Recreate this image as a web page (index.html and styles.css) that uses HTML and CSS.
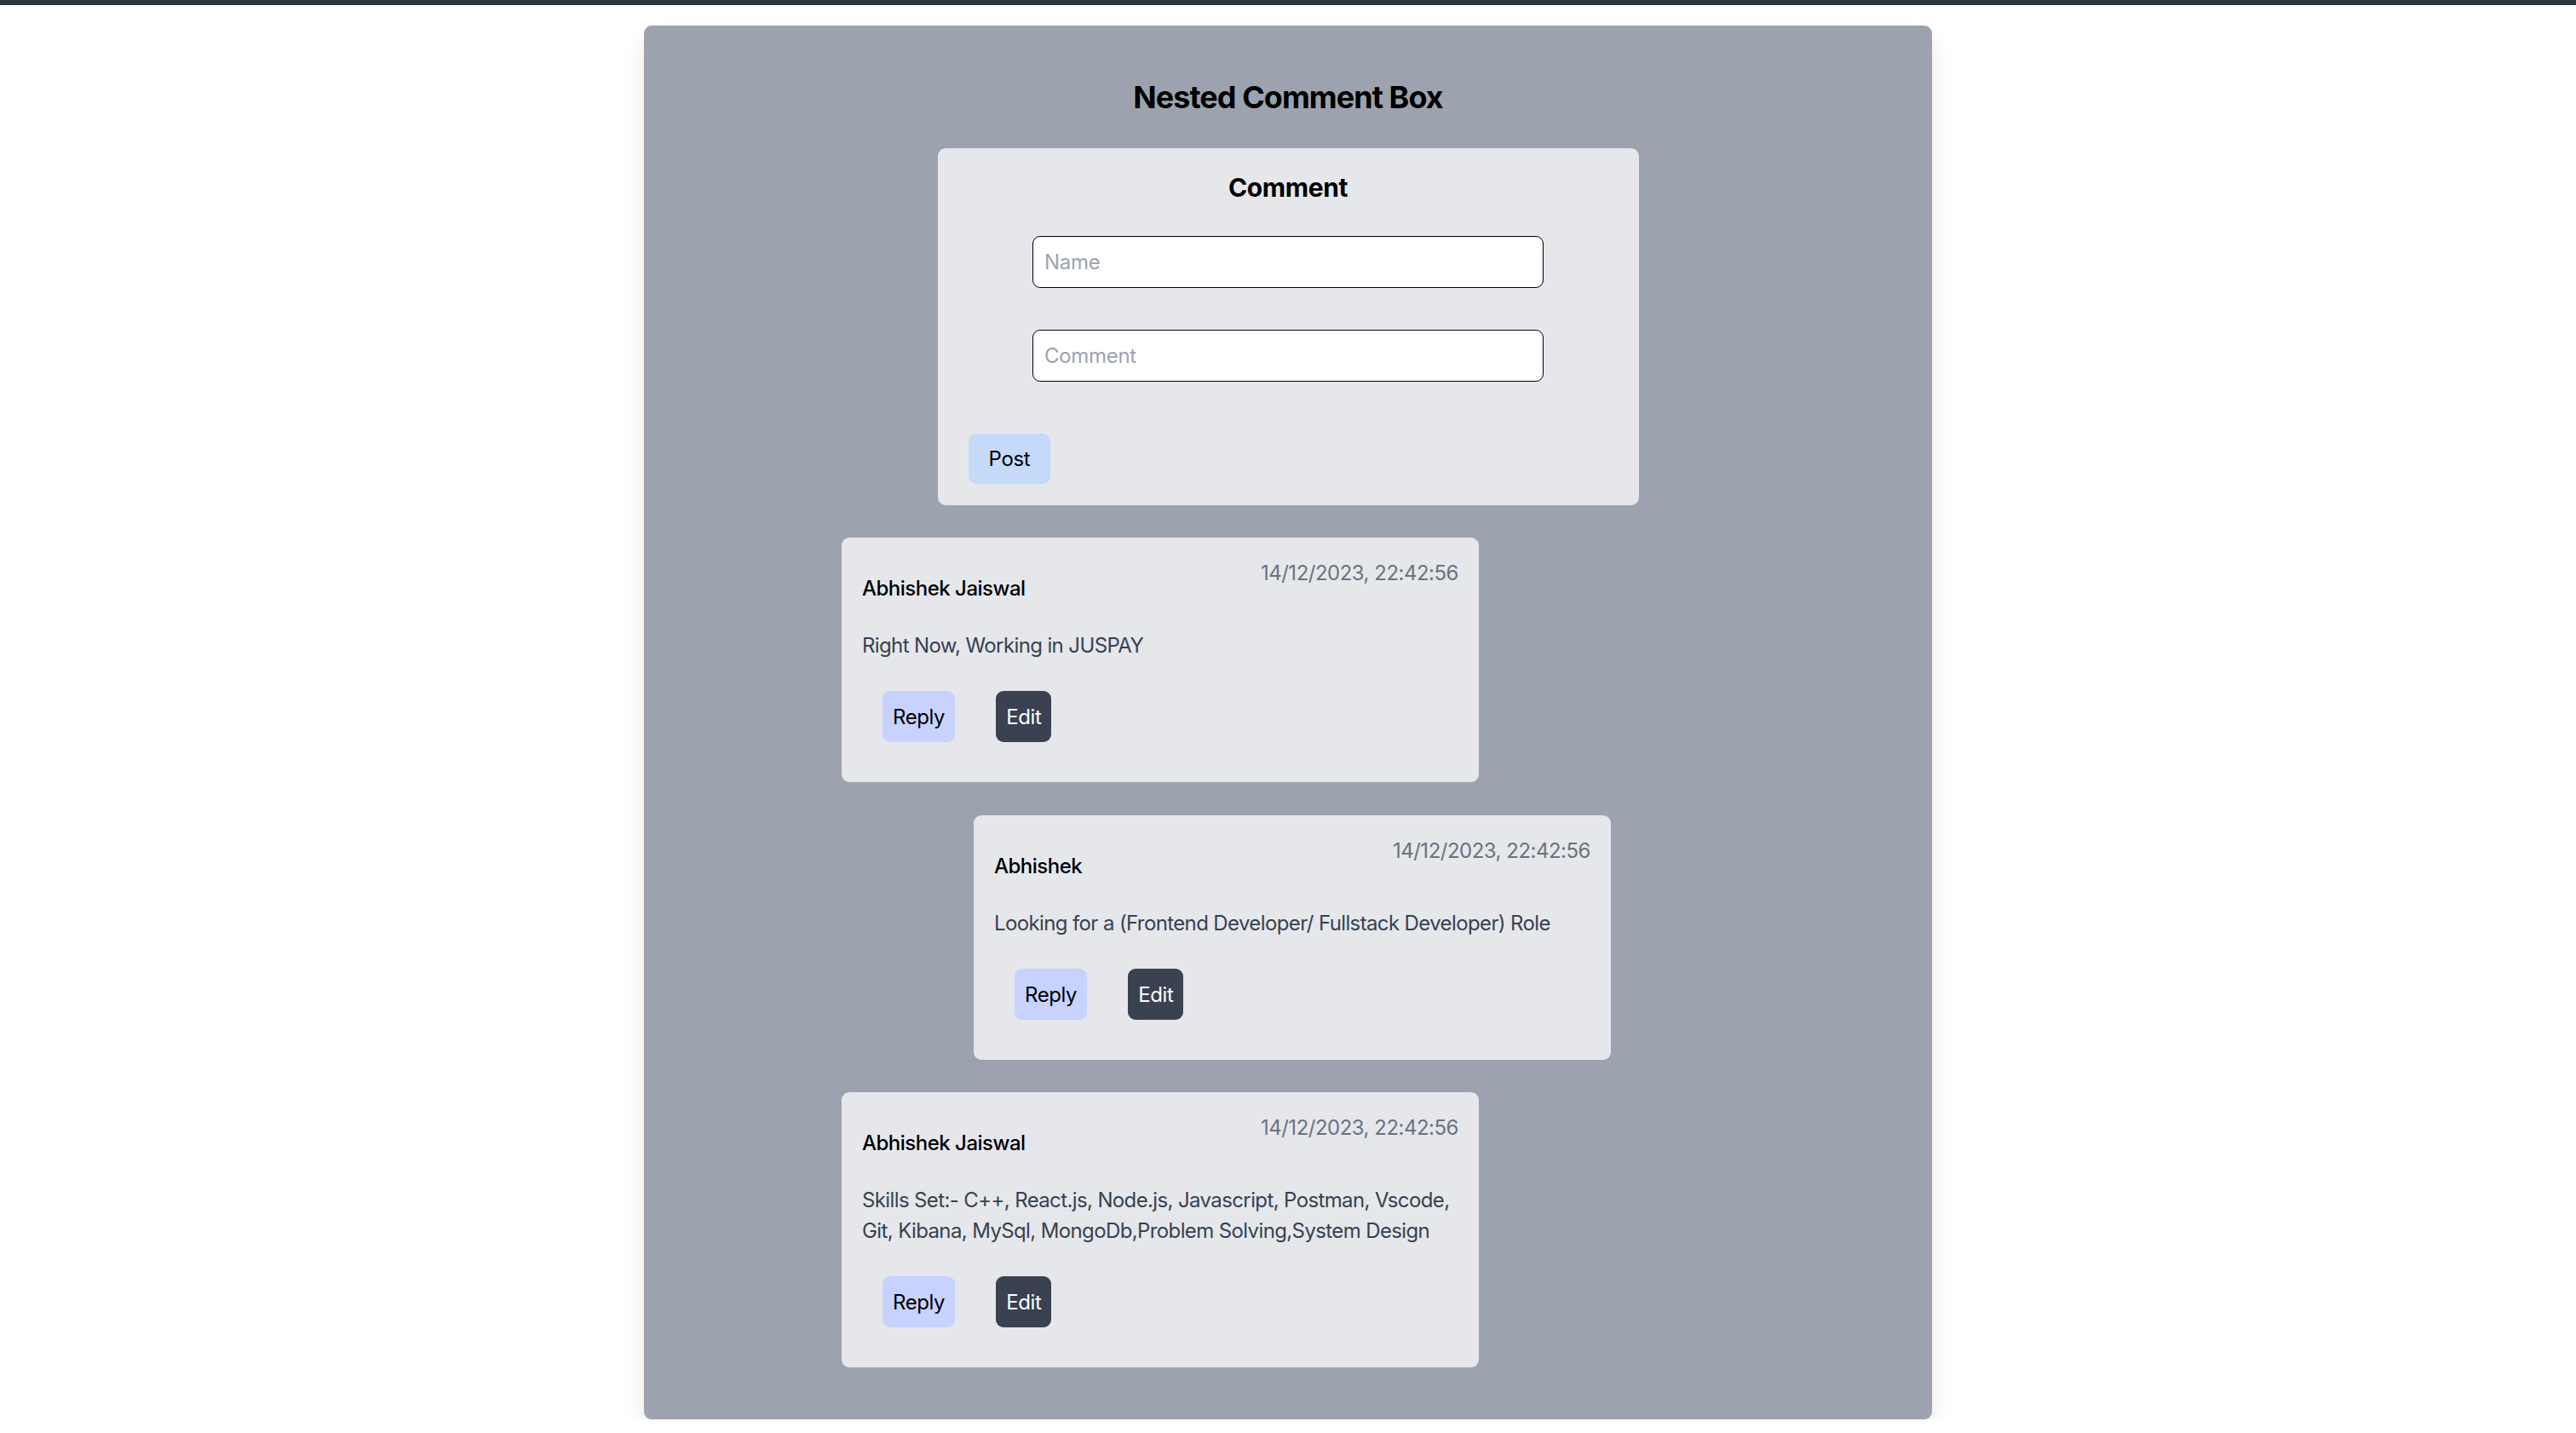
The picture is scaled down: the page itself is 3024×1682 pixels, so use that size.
FILE: index.html
```html
<!DOCTYPE html>
<html lang="en">
<head>
<meta charset="utf-8">
<title>Nested Comment Box</title>
<link rel="stylesheet" href="styles.css">
</head>
<body>
<div class="topbar"></div>
<main class="box">
  <h1 class="title">Nested Comment Box</h1>
  <section class="form-card">
    <h2 class="form-title">Comment</h2>
    <input class="field field-first" type="text" placeholder="Name">
    <input class="field field-second" type="text" placeholder="Comment">
    <button class="post">Post</button>
  </section>
  <div class="comments">
    <div class="thread">
      <article class="card">
        <div class="card-head">
          <span class="author">Abhishek Jaiswal</span>
          <span class="stamp">14/12/2023, 22:42:56</span>
        </div>
        <p class="body">Right Now, Working in JUSPAY</p>
        <div class="actions">
          <button class="btn btn-reply">Reply</button>
          <button class="btn btn-edit">Edit</button>
        </div>
      </article>
      <div class="replies">
        <article class="card">
          <div class="card-head">
            <span class="author">Abhishek</span>
            <span class="stamp">14/12/2023, 22:42:56</span>
          </div>
          <p class="body">Looking for a (Frontend Developer/ Fullstack Developer) Role</p>
          <div class="actions">
            <button class="btn btn-reply">Reply</button>
            <button class="btn btn-edit">Edit</button>
          </div>
        </article>
      </div>
    </div>
    <div class="thread">
      <article class="card">
        <div class="card-head">
          <span class="author">Abhishek Jaiswal</span>
          <span class="stamp">14/12/2023, 22:42:56</span>
        </div>
        <p class="body">Skills Set:- C++, React.js, Node.js, Javascript, Postman, Vscode, Git, Kibana, MySql, MongoDb,Problem Solving,System Design</p>
        <div class="actions">
          <button class="btn btn-reply">Reply</button>
          <button class="btn btn-edit">Edit</button>
        </div>
      </article>
    </div>
  </div>
</main>
</body>
</html>
```

FILE: styles.css
```css
* {
  box-sizing: border-box;
}

html, body {
  margin: 0;
  padding: 0;
  background: #ffffff;
}

body {
  font-family: Inter, "Noto Sans", "Liberation Sans", sans-serif;
  font-size: 24px;
  line-height: 36px;
  color: #000000;
}

.topbar {
  height: 6px;
  background: #303342;
}

.box {
  width: 1512px;
  margin: 24px auto 0;
  padding: 60px 0 61px;
  background: #9ca3af;
  border-radius: 9px;
  box-shadow: 0 15px 30px -4px rgba(0, 0, 0, 0.12), 0 6px 12px -6px rgba(0, 0, 0, 0.1);
  display: flex;
  flex-direction: column;
  align-items: center;
}

.title {
  margin: 0;
  font-size: 36px;
  line-height: 48px;
  font-weight: 700;
  letter-spacing: -0.95px;
}

.form-card {
  margin-top: 36px;
  width: 823px;
  padding: 25px 24px;
  background: #e5e7eb;
  border-radius: 9px;
  display: flex;
  flex-direction: column;
  align-items: center;
}

.form-title {
  margin: 0;
  font-size: 30px;
  line-height: 42px;
  font-weight: 700;
  letter-spacing: -0.4px;
}

.field {
  width: 600px;
  height: 61px;
  padding: 0 13px;
  border: 1.5px solid #000000;
  border-radius: 9px;
  background: #ffffff;
  font-family: inherit;
  font-size: 24px;
  letter-spacing: -0.3px;
  color: #000000;
  outline: none;
}

.field::placeholder {
  color: #9ca3af;
}

.field-first {
  margin-top: 36px;
}

.field-second {
  margin-top: 49px;
}

.post {
  align-self: flex-start;
  margin: 61px 0 0 12px;
  height: 59px;
  padding: 0 24px;
  border: none;
  border-radius: 9px;
  background: #c4daf8;
  font-family: inherit;
  font-size: 24px;
  letter-spacing: -0.3px;
  color: #000000;
}

.comments {
  align-self: stretch;
  padding-left: 232px;
  display: flex;
  flex-direction: column;
}

.thread {
  display: flex;
  flex-direction: column;
}

.replies {
  padding-left: 155px;
}

.card {
  margin-top: 38px;
  width: 748px;
  padding: 24px;
  background: #e5e7eb;
  border-radius: 9px;
}

.replies .card {
  margin-top: 39px;
}

.card-head {
  display: flex;
  justify-content: space-between;
  align-items: flex-start;
}

.author {
  margin-top: 18px;
  font-weight: 500;
  color: #000000;
  letter-spacing: -0.5px;
}

.stamp {
  color: #6b7280;
  letter-spacing: -0.5px;
}

.body {
  margin: 31px 0 0;
  color: #374151;
  letter-spacing: -0.62px;
}

.actions {
  margin-top: 35px;
  margin-bottom: 23px;
  display: flex;
}

.btn {
  height: 60px;
  margin: 0 24px;
  padding: 0 12px;
  border: none;
  border-radius: 9px;
  font-family: inherit;
  font-size: 24px;
  letter-spacing: -0.4px;
}

.btn-reply {
  background: #c7d2fe;
  color: #000000;
}

.btn-edit {
  background: #3a4150;
  color: #ffffff;
}
```
